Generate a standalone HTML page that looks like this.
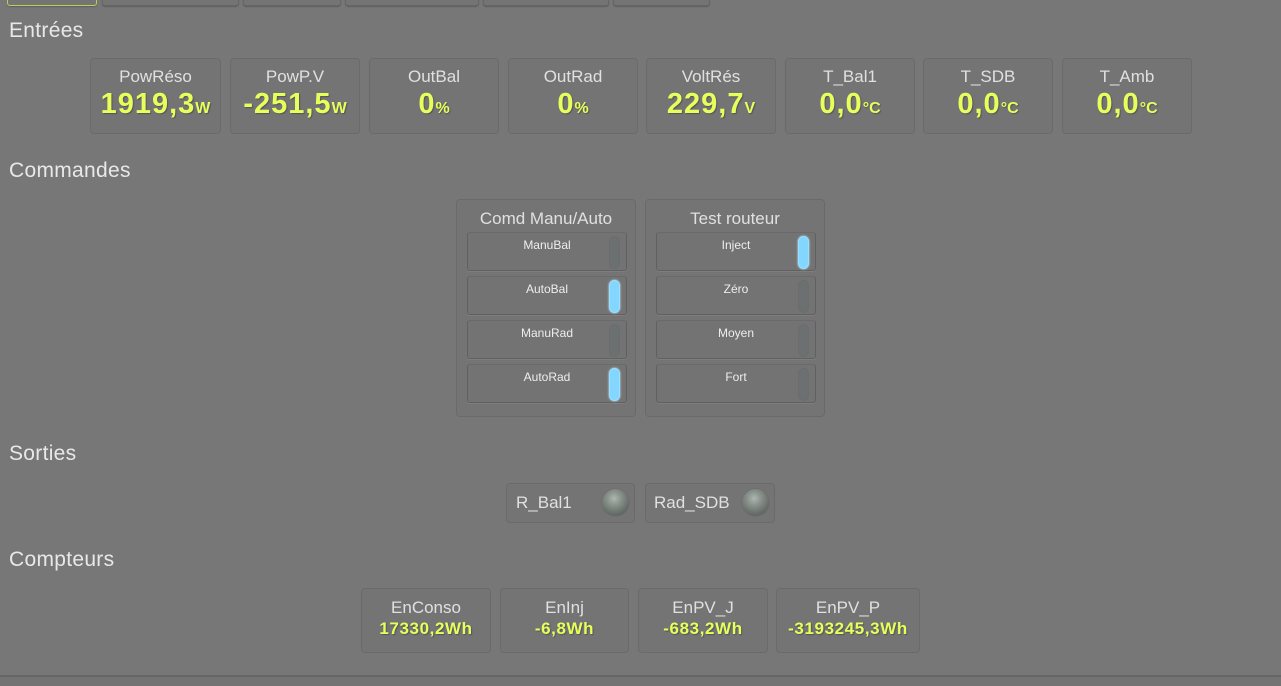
<!DOCTYPE html>
<html><head><meta charset="utf-8"><style>
*{margin:0;padding:0;box-sizing:border-box}
body{width:1281px;height:686px;background:#777;position:relative;overflow:hidden;font-family:"Liberation Sans","DejaVu Sans",sans-serif;color:#e6e6e6}
.a{position:absolute}
.tab{position:absolute;top:-6px;height:12px;border:1px solid #666;border-radius:0 0 3px 3px;background:#747474;box-shadow:0 1px 1px #5e5e5e}
h2{position:absolute;left:9px;font-size:21px;font-weight:normal;color:#e8e8e8;letter-spacing:.3px}
.box{position:absolute;border:1px solid #6a6a6a;border-radius:4px;background:#747474;text-align:center;box-shadow:inset 0 0 1px #7c7c7c}
.lbl{font-size:17px;color:#e0e0e0}
.val{color:#e6ff5a;font-weight:bold;text-shadow:1px 1px 1px #555}
.big{font-size:29px;line-height:30px;letter-spacing:1px;margin-top:2px}
.big small{font-size:16px;letter-spacing:0}
.sm{font-size:17px;line-height:22px;letter-spacing:.6px}
.btn{position:absolute;left:10px;width:160px;height:39px;border:1px solid #606060;border-top-color:#6a6a6a;border-radius:3px;background:#737373;box-shadow:0 1px 0 #7e7e7e;font-size:12px;color:#eee;text-align:center;padding-top:5px}
.ind{position:absolute;right:6px;top:3px;width:11px;height:33px;border-radius:6px;background:#6c7071;border:1px solid #6a6d6e}
.ind.on{background:#82d6ff;border-color:#9adfff;box-shadow:0 0 2px #cdefff}
.led{position:absolute;right:5px;top:5px;width:27px;height:27px;border-radius:50%;background:radial-gradient(circle at 45% 35%,#aeb6b0 0,#8a928c 30%,#646a66 70%,#565a57 100%);box-shadow:0 0 1px #555}
</style></head><body>
<div class="tab" style="left:7px;width:90px;border-color:#b7d25a"></div>
<div class="tab" style="left:102px;width:137px"></div>
<div class="tab" style="left:243px;width:98px"></div>
<div class="tab" style="left:345px;width:134px"></div>
<div class="tab" style="left:483px;width:126px"></div>
<div class="tab" style="left:613px;width:97px"></div>

<h2 style="top:19px">Entrées</h2>
<div class="box" style="left:90px;top:58px;width:131px;height:76px"><div class="lbl" style="margin-top:8px">PowRéso</div><div class="val big">1919,3<small>W</small></div></div>
<div class="box" style="left:230px;top:58px;width:130px;height:76px"><div class="lbl" style="margin-top:8px">PowP.V</div><div class="val big">-251,5<small>W</small></div></div>
<div class="box" style="left:369px;top:58px;width:130px;height:76px"><div class="lbl" style="margin-top:8px">OutBal</div><div class="val big">0<small>%</small></div></div>
<div class="box" style="left:508px;top:58px;width:130px;height:76px"><div class="lbl" style="margin-top:8px">OutRad</div><div class="val big">0<small>%</small></div></div>
<div class="box" style="left:646px;top:58px;width:130px;height:76px"><div class="lbl" style="margin-top:8px">VoltRés</div><div class="val big">229,7<small>V</small></div></div>
<div class="box" style="left:785px;top:58px;width:130px;height:76px"><div class="lbl" style="margin-top:8px">T_Bal1</div><div class="val big">0,0<small>°C</small></div></div>
<div class="box" style="left:923px;top:58px;width:130px;height:76px"><div class="lbl" style="margin-top:8px">T_SDB</div><div class="val big">0,0<small>°C</small></div></div>
<div class="box" style="left:1062px;top:58px;width:130px;height:76px"><div class="lbl" style="margin-top:8px">T_Amb</div><div class="val big">0,0<small>°C</small></div></div>

<h2 style="top:159px">Commandes</h2>
<div class="box" style="left:456px;top:199px;width:180px;height:218px"><div class="lbl" style="margin-top:9px">Comd Manu/Auto</div>
<div class="btn" style="top:32px">ManuBal<div class="ind"></div></div>
<div class="btn" style="top:76px">AutoBal<div class="ind on"></div></div>
<div class="btn" style="top:120px">ManuRad<div class="ind"></div></div>
<div class="btn" style="top:164px">AutoRad<div class="ind on"></div></div>
</div>
<div class="box" style="left:645px;top:199px;width:180px;height:218px"><div class="lbl" style="margin-top:9px">Test routeur</div>
<div class="btn" style="top:32px">Inject<div class="ind on"></div></div>
<div class="btn" style="top:76px">Zéro<div class="ind"></div></div>
<div class="btn" style="top:120px">Moyen<div class="ind"></div></div>
<div class="btn" style="top:164px">Fort<div class="ind"></div></div>
</div>

<h2 style="top:442px">Sorties</h2>
<div class="box" style="left:506px;top:483px;width:129px;height:40px;text-align:left"><div class="lbl" style="margin:9px 0 0 9px">R_Bal1</div><div class="led"></div></div>
<div class="box" style="left:645px;top:483px;width:130px;height:40px;text-align:left"><div class="lbl" style="margin:9px 0 0 8px">Rad_SDB</div><div class="led"></div></div>

<h2 style="top:548px">Compteurs</h2>
<div class="box" style="left:361px;top:588px;width:130px;height:65px"><div class="lbl" style="margin-top:9px">EnConso</div><div class="val sm">17330,2Wh</div></div>
<div class="box" style="left:500px;top:588px;width:129px;height:65px"><div class="lbl" style="margin-top:9px">EnInj</div><div class="val sm">-6,8Wh</div></div>
<div class="box" style="left:638px;top:588px;width:130px;height:65px"><div class="lbl" style="margin-top:9px">EnPV_J</div><div class="val sm">-683,2Wh</div></div>
<div class="box" style="left:776px;top:588px;width:144px;height:65px"><div class="lbl" style="margin-top:9px">EnPV_P</div><div class="val sm">-3193245,3Wh</div></div>

<div class="a" style="left:0;top:675px;width:1281px;height:11px;background:#737373;border-top:2px solid #666"></div>
</body></html>
